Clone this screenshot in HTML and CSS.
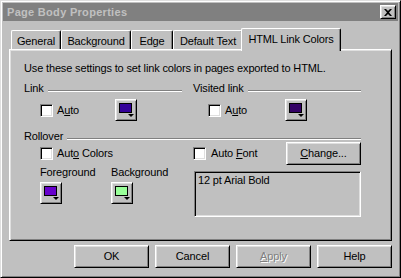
FILE: index.html
```html
<!DOCTYPE html>
<html lang="en">

<head>
    <meta charset="UTF-8">
    <title>Page Body Properties</title>
    <link rel="stylesheet" href="styles.css">
</head>

<body>
    <div class="window">
        <div class="titlebar">
            <span class="title">Page Body Properties</span>
            <span class="close-btn">
                <svg width="8" height="7" viewBox="0 0 8 7">
                    <path d="M0 0h2l2 2 2-2h2L5 3.5 8 7H6L4 5 2 7H0l3-3.5z" fill="#000"/>
                </svg>
            </span>
        </div>
        <div class="body">
            <div class="tabs">
                <div class="tab tab-general">General</div>
                <div class="tab tab-background">Background</div>
                <div class="tab tab-edge">Edge</div>
                <div class="tab tab-default">Default Text</div>
                <div class="tab tab-html active">HTML Link Colors</div>
            </div>
            <div class="panel">
                <p class="intro">Use these settings to set link colors in pages exported to HTML.</p>
                <div class="groups">
                    <div class="group">
                        <div class="group-head"><span>Link</span><span class="group-line"></span></div>
                        <div class="pick-row">
                            <label class="check"><span class="box"></span><span>A<u>u</u>to</span></label>
                            <span class="color-btn"><span class="swatch sw-link"></span><span class="arrow"></span></span>
                        </div>
                    </div>
                    <div class="group">
                        <div class="group-head"><span>Visited link</span><span class="group-line"></span></div>
                        <div class="pick-row pick-row-right">
                            <label class="check"><span class="box"></span><span>A<u>u</u>to</span></label>
                            <span class="color-btn"><span class="swatch sw-visited"></span><span class="arrow"></span></span>
                        </div>
                    </div>
                    <div class="group-head rollover-head"><span>Rollover</span><span class="group-line"></span></div>
                    <div class="rollover-left">
                        <div class="check-row">
                            <label class="check"><span class="box"></span><span>Aut<u>o</u> Colors</span></label>
                        </div>
                        <div class="pickers">
                            <div class="picker">
                                <span>Foreground</span>
                                <span class="color-btn"><span class="swatch sw-fg"></span><span class="arrow"></span></span>
                            </div>
                            <div class="picker">
                                <span>Background</span>
                                <span class="color-btn"><span class="swatch sw-bg"></span><span class="arrow"></span></span>
                            </div>
                        </div>
                    </div>
                    <div class="rollover-right">
                        <div class="font-row">
                            <label class="check check-font"><span class="box"></span><span>Auto <u>F</u>ont</span></label>
                            <button class="btn"><u>C</u>hange...</button>
                        </div>
                        <div class="preview">12 pt Arial Bold</div>
                    </div>
                </div>
            </div>
            <div class="actions">
                <button class="btn">OK</button>
                <button class="btn">Cancel</button>
                <button class="btn disabled"><u>A</u>pply</button>
                <button class="btn">Help</button>
            </div>
        </div>
    </div>
</body>

</html>
```

FILE: styles.css
```css
/* Win95 style property dialog */
body {
    margin: 0;
    padding: 0;
    font-family: "Liberation Sans", Arial, sans-serif;
    font-size: 11px;
    line-height: 13px;
    letter-spacing: -0.15px;
    color: #000;
    background-color: #c0c0c0;
}

.window {
    width: 401px;
    height: 278px;
    box-sizing: border-box;
    padding: 2px;
    background-color: #c0c0c0;
    border: 1px solid;
    border-color: #dfdfdf #000 #000 #dfdfdf;
    box-shadow: inset 1px 1px #fff, inset -1px -1px #808080;
}

.titlebar {
    height: 18px;
    display: flex;
    align-items: center;
    justify-content: space-between;
    padding: 0 2px 0 4px;
    background-color: #808080;
}

.title {
    color: #c0c0c0;
    font-weight: bold;
    letter-spacing: 0.3px;
}

.close-btn {
    width: 16px;
    height: 14px;
    box-sizing: border-box;
    display: flex;
    align-items: center;
    justify-content: center;
    background-color: #c0c0c0;
    border: 1px solid;
    border-color: #fff #000 #000 #fff;
    box-shadow: inset 1px 1px #dfdfdf, inset -1px -1px #808080;
}

.body {
    padding: 7px 6px 0;
}

/* tabs */
.tabs {
    height: 21px;
    display: flex;
    align-items: flex-end;
    padding-left: 2px;
}

.tab {
    height: 19px;
    box-sizing: border-box;
    padding-top: 4px;
    text-align: center;
    white-space: nowrap;
    border-top: 1px solid #fff;
    border-left: 1px solid #fff;
    border-right: 1px solid #000;
    border-radius: 2px 2px 0 0;
    box-shadow: inset -1px 0 #808080;
}

.tab-general { width: 50px; }
.tab-background { width: 70px; }
.tab-edge { width: 42px; }
.tab-default { width: 70px; }

.tab.active {
    width: 100px;
    height: 23px;
    margin: 0 -2px -2px;
    position: relative;
    z-index: 1;
    background-color: #c0c0c0;
}

/* panel */
.panel {
    height: 192px;
    box-sizing: border-box;
    padding: 12px 0 0 14px;
    border: 1px solid;
    border-color: #fff #000 #000 #fff;
    box-shadow: inset 1px 1px #dfdfdf, inset -1px -1px #808080;
}

.intro {
    margin: 0;
}

.groups {
    display: grid;
    grid-template-columns: 158px 168px;
    column-gap: 11px;
    margin-top: 7px;
}

.group-head {
    display: flex;
    gap: 4px;
}

.group-line {
    flex: 1;
    align-self: flex-start;
    margin-top: 8px;
    border-top: 1px solid #808080;
    border-bottom: 1px solid #fff;
}

.rollover-head {
    grid-column: 1 / -1;
    margin-top: 9px;
    margin-bottom: -1px;
}

.pick-row {
    height: 22px;
    display: flex;
    align-items: center;
    margin-top: 4px;
    padding-left: 16px;
}

.pick-row-right {
    padding-left: 15px;
}

.pick-row-right .check {
    width: 77px;
}

.check {
    width: 75px;
    display: flex;
    align-items: center;
    gap: 4px;
}

.check-font {
    width: auto;
    gap: 5px;
}

.box {
    width: 13px;
    height: 13px;
    box-sizing: border-box;
    background-color: #fff;
    border: 1px solid;
    border-color: #808080 #fff #fff #808080;
    box-shadow: inset 1px 1px #000, inset -1px -1px #dfdfdf;
}

.color-btn {
    width: 22px;
    height: 22px;
    box-sizing: border-box;
    display: flex;
    flex-direction: column;
    padding: 3px 0 0 3px;
    border: 1px solid;
    border-color: #fff #000 #000 #fff;
    box-shadow: inset 1px 1px #dfdfdf, inset -1px -1px #808080;
}

.swatch {
    width: 13px;
    height: 10px;
    box-sizing: border-box;
    border: 1px solid #000;
}

.sw-link { background-color: #330099; }
.sw-visited { background-color: #330066; }
.sw-fg { background-color: #6600cc; }
.sw-bg { background-color: #99ff99; }

.arrow {
    width: 0;
    height: 0;
    margin: 1px 0 0 9px;
    border-left: 3px solid transparent;
    border-right: 3px solid transparent;
    border-top: 3px solid #000;
}

.check-row {
    height: 23px;
    display: flex;
    align-items: center;
    padding-left: 16px;
}

.pickers {
    display: flex;
    margin-top: 1px;
    padding-left: 16px;
}

.picker {
    width: 76px;
    display: flex;
    flex-direction: column;
    align-items: flex-start;
    gap: 3px;
}

.font-row {
    height: 23px;
    display: flex;
    align-items: center;
    justify-content: space-between;
}

.preview {
    height: 46px;
    box-sizing: border-box;
    margin: 6px 0 0 1px;
    padding: 2px 3px;
    border: 1px solid;
    border-color: #808080 #fff #fff #808080;
    box-shadow: inset 1px 1px #000, inset -1px -1px #dfdfdf;
}

/* buttons */
.btn {
    width: 75px;
    height: 23px;
    box-sizing: border-box;
    padding: 0;
    font: inherit;
    letter-spacing: inherit;
    color: #000;
    background-color: #c0c0c0;
    border: 1px solid;
    border-color: #fff #000 #000 #fff;
    border-radius: 0;
    box-shadow: inset 1px 1px #dfdfdf, inset -1px -1px #808080;
}

.btn.disabled {
    color: #808080;
    text-shadow: 1px 1px #fff;
}

.actions {
    display: flex;
    justify-content: flex-end;
    gap: 6px;
    margin-top: 4px;
}
```
